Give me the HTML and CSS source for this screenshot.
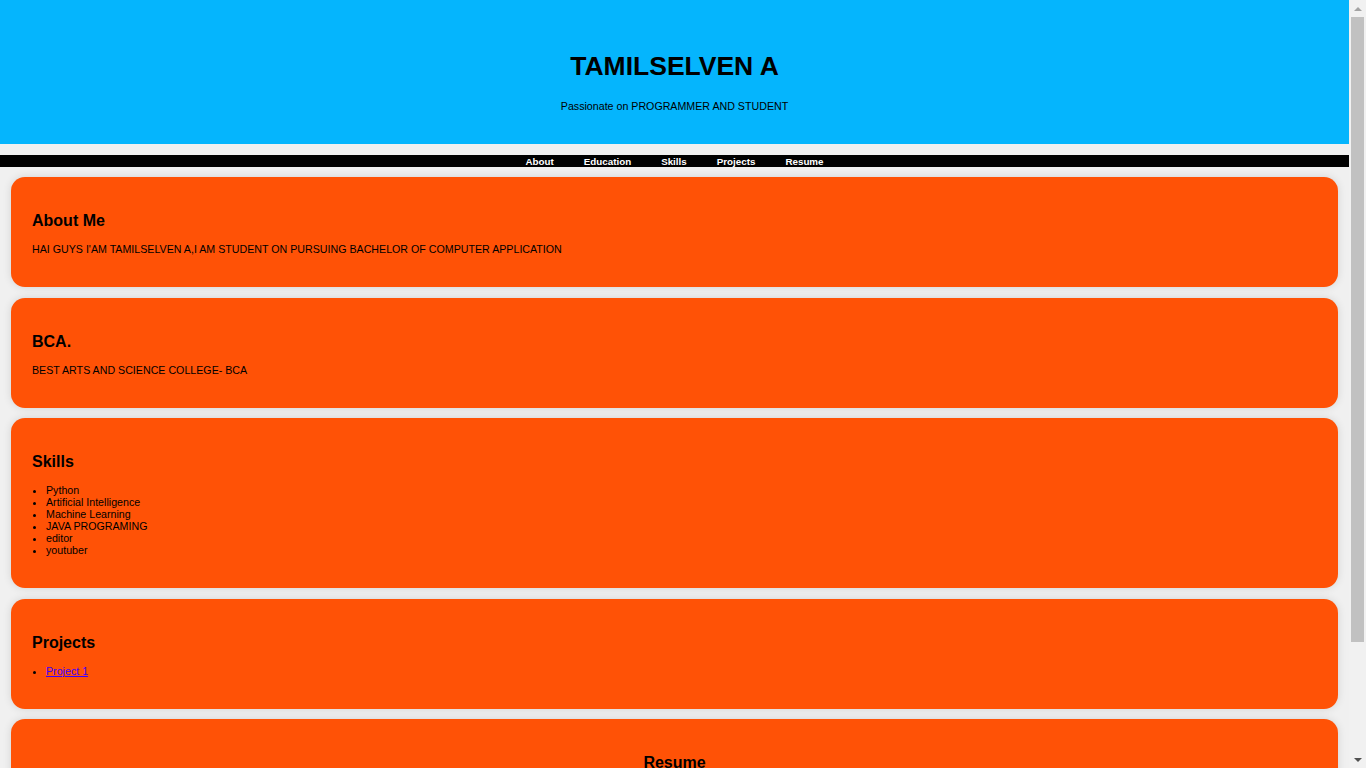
FILE: index.html
```html
<!DOCTYPE html>
<html lang="en">
<head>
<meta charset="utf-8">
<title>TAMILSELVEN A</title>
<link rel="stylesheet" href="styles.css">
</head>
<body>
<header class="site-header">
  <h1 class="site-title">TAMILSELVEN A</h1>
  <p class="tagline">Passionate on PROGRAMMER AND STUDENT</p>
</header>
<nav class="site-nav">
  <a href="#about">About</a>
  <a href="#education">Education</a>
  <a href="#skills">Skills</a>
  <a href="#projects">Projects</a>
  <a href="#resume">Resume</a>
</nav>
<main class="content">
  <section class="card" id="about">
    <h2>About Me</h2>
    <p>HAI GUYS I'AM TAMILSELVEN A,I AM STUDENT ON PURSUING BACHELOR OF COMPUTER APPLICATION</p>
  </section>
  <section class="card" id="education">
    <h2>BCA.</h2>
    <p>BEST ARTS AND SCIENCE COLLEGE- BCA</p>
  </section>
  <section class="card" id="skills">
    <h2>Skills</h2>
    <ul class="list">
      <li>Python</li>
      <li>Artificial Intelligence</li>
      <li>Machine Learning</li>
      <li>JAVA PROGRAMING</li>
      <li>editor</li>
      <li>youtuber</li>
    </ul>
  </section>
  <section class="card" id="projects">
    <h2>Projects</h2>
    <ul class="list">
      <li><a href="#">Project 1</a></li>
    </ul>
  </section>
  <section class="card card-center" id="resume">
    <h2>Resume</h2>
    <p class="resume-text">Click the button below to download my resume.</p>
    <a class="resume-btn" href="#">Download Resume</a>
  </section>
</main>
<div class="scrollbar" aria-hidden="true">
  <span class="sb-btn sb-up"></span>
  <span class="sb-track"><span class="sb-thumb"></span></span>
  <span class="sb-btn sb-down"></span>
</div>
</body>
</html>
```
FILE: styles.css
```css
html, body {
  margin: 0;
  padding: 0;
}
body {
  background: #f0f0f0;
  font-family: "Liberation Sans", Arial, sans-serif;
  font-size: 10.67px;
  line-height: 12px;
  color: #000;
  margin-right: 17px;
}
.site-header {
  background: #05b5fd;
  height: 144px;
  box-sizing: border-box;
  padding-top: 51px;
  text-align: center;
}
.site-title {
  margin: 0;
  font-size: 26.5px;
  line-height: 30px;
  font-weight: bold;
}
.tagline {
  margin: 19px 0 0;
}
.site-nav {
  margin-top: 11px;
  background: #000;
  height: 12px;
  display: flex;
  justify-content: center;
  align-items: flex-start;
}
.site-nav a {
  color: #fff;
  font-weight: bold;
  font-size: 9.8px;
  text-decoration: none;
  margin: 0 15px;
  line-height: 14px;
}
.content {
  display: flex;
  flex-direction: column;
  gap: 10.5px;
  padding: 10px 11px 11px;
}
.card {
  background: #ff5206;
  border-radius: 14px;
  padding: 35px 21px 32px;
  box-shadow: 0 0 8px rgba(0, 0, 0, 0.12);
}
.card h2 {
  margin: 0 0 13px;
  font-size: 16px;
  line-height: 18px;
  font-weight: bold;
}
.card p {
  margin: 0;
}
.list {
  margin: 0;
  padding-left: 14px;
}
.list a {
  color: #3a00ff;
}
.card-center {
  text-align: center;
}
.card .resume-text {
  margin-bottom: 20px;
}
.resume-btn {
  display: inline-block;
  background: #000;
  color: #fff;
  text-decoration: none;
  padding: 12px 20px;
  border-radius: 6px;
  font-weight: bold;
}

/* browser scrollbar overlay */
.scrollbar {
  position: fixed;
  top: 0;
  right: 0;
  bottom: 0;
  width: 17px;
  background: #f1f1f1;
  display: flex;
  flex-direction: column;
}
.sb-btn {
  height: 17px;
  flex: none;
  display: flex;
  align-items: center;
  justify-content: center;
}
.sb-btn::before {
  content: "";
  width: 0;
  height: 0;
  border-left: 4px solid transparent;
  border-right: 4px solid transparent;
}
.sb-up::before {
  border-bottom: 4px solid #a3a3a3;
}
.sb-down::before {
  border-top: 4px solid #505050;
}
.sb-track {
  flex: 1;
  display: flex;
  flex-direction: column;
  align-items: center;
}
.sb-thumb {
  width: 13px;
  height: 625px;
  background: #c1c1c1;
}
```
